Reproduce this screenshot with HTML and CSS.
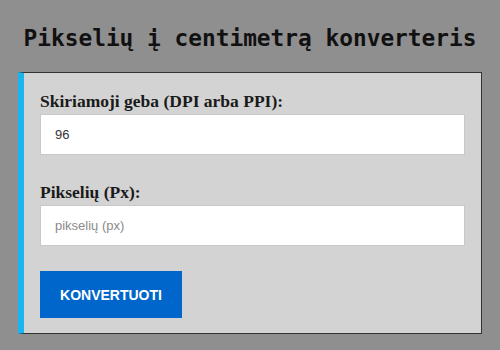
FILE: index.html
```html
<!DOCTYPE html>
<html lang="lt">
<head>
    <meta charset="UTF-8">
    <title>Pikselių į centimetrą konverteris</title>
    <link rel="stylesheet" href="styles.css">
</head>
<body>
    <h1 class="title">Pikselių į centimetrą konverteris</h1>

    <div class="converter">
        <label for="dpi">Skiriamoji geba (DPI arba PPI):</label>
        <input type="text" id="dpi" value="96">

        <label for="pixels" class="second">Pikselių (Px):</label>
        <input type="text" id="pixels" placeholder="pikselių (px)">

        <button id="convert">KONVERTUOTI</button>
    </div>
</body>
</html>
```

FILE: styles.css
```css
body {
    margin: 0;
    padding: 0;
    background: #8f8f8f;
    font-family: "Liberation Serif", serif;
}
.title {
    margin: 0;
    padding: 24px 0 0 0;
    height: 48px;
    text-align: center;
    font-family: "DejaVu Sans Mono", monospace;
    font-size: 22.8px;
    font-weight: bold;
    line-height: 28px;
    color: #111;
}
.converter {
    margin: 0 18px;
    padding: 18px 16px 15px 16px;
    background: #d3d3d3;
    border: 1px solid #333;
    border-left: 6px solid #1ab4ef;
}
label {
    display: block;
    font-size: 17.5px;
    font-weight: bold;
    line-height: 20px;
    color: #1a1a1a;
    margin-bottom: 3px;
}
label.second {
    margin-top: 27px;
}
input[type="text"] {
    display: block;
    box-sizing: border-box;
    width: 100%;
    height: 41px;
    margin: 0;
    padding: 0 14px;
    border: 1px solid #c8c8c8;
    background: #fff;
    font-family: "Liberation Sans", Arial, sans-serif;
    font-size: 13px;
    color: #333;
    outline: none;
}
input::placeholder {
    color: #8a8a8a;
}
button {
    display: block;
    margin-top: 25px;
    height: 47px;
    width: 142px;
    padding: 0;
    background-color: #0066cc;
    color: #fff;
    border: none;
    font-family: "Liberation Sans", Arial, sans-serif;
    font-size: 14px;
    font-weight: bold;
    cursor: pointer;
}
button:hover {
    background-color: #0056b3;
}
```
